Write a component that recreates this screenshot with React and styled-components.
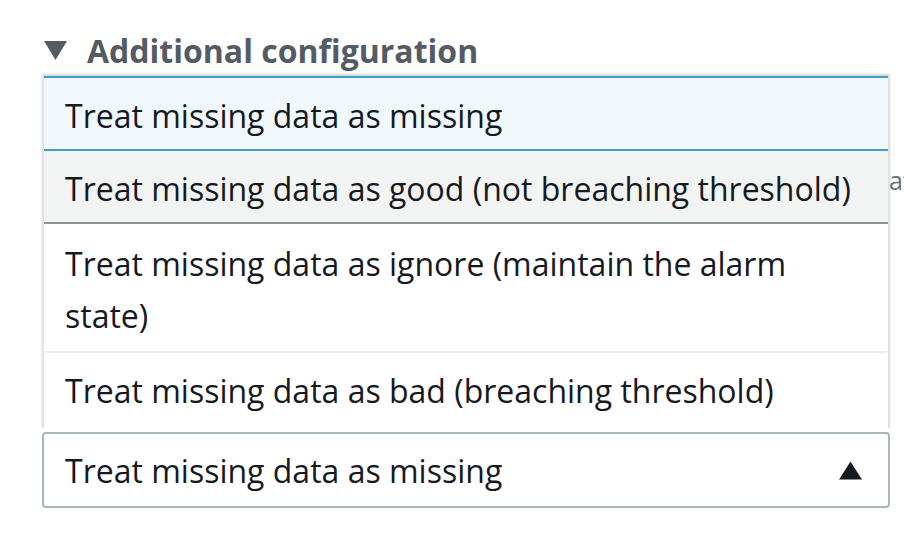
import React from "react";
import styled, { createGlobalStyle } from "styled-components";

const GlobalStyle = createGlobalStyle`
  html, body {
    margin: 0;
    padding: 0;
    background: #ffffff;
  }
  body {
    font-family: "Open Sans", "Noto Sans", sans-serif;
    color: #16191f;
    overflow: hidden;
  }
`;

const Page = styled.div`
  width: 848px;
  padding: 25px 0 0 42px;
`;

const Heading = styled.div`
  display: flex;
  align-items: center;
  gap: 20px;
  height: 51px;
  padding-left: 2px;
  color: #545b64;
  font-size: 32px;
  font-weight: 700;
`;

const Caret = styled.svg`
  width: 23px;
  height: 19px;
  fill: ${(p) => p.$color || "#545b64"};
  flex-shrink: 0;
`;

const Field = styled.div`
  position: relative;
  display: flex;
  flex-direction: column;
`;

const Underneath = styled.div`
  height: 356px;
  box-sizing: border-box;
  padding: 24px 0 0 23px;
  white-space: nowrap;
`;

const Label = styled.div`
  font-size: 32px;
  font-weight: 700;
  line-height: 52px;
`;

const Description = styled.div`
  display: flex;
  margin-top: 8px;
  font-size: 25px;
  line-height: 40px;
  color: #687078;
`;

// the part of the hint that the open menu hides
const Hidden = styled.span`
  flex: 0 0 824px;
  overflow: hidden;
`;

const Menu = styled.ul`
  position: absolute;
  top: 0;
  left: 0;
  right: 0;
  height: 352px;
  margin: 0;
  padding: 0;
  list-style: none;
  background: #ffffff;
  border-left: 2px solid #dfe3e4;
  border-right: 2px solid #dfe3e4;
  box-shadow: 0 -2px 2px rgba(0, 28, 36, 0.18);
  box-sizing: border-box;
  overflow: hidden;
`;

const Option = styled.li`
  padding: 12px 19px 7px;
  margin: ${(p) => (p.$selected || p.$hover ? "0 -2px" : "0")};
  font-size: 32px;
  line-height: 52px;
  color: #16191f;
  border: 2px solid transparent;
  border-top: 2px solid ${(p) => (p.$divider ? "#eaeded" : "transparent")};
  ${(p) =>
    p.$selected &&
    `
    background: #f1f8fb;
    border: 2px solid #3f9fca;
    padding-left: 21px;
  `}
  ${(p) =>
    p.$hover &&
    `
    background: #f2f3f3;
    border: 2px solid #879596;
    border-top: none;
    padding-left: 21px;
  `}
`;

const Select = styled.div`
  display: flex;
  align-items: center;
  justify-content: space-between;
  height: 76px;
  padding: 0 26px 0 21px;
  border: 2px solid #aab7b8;
  border-radius: 4px;
  box-sizing: border-box;
  font-size: 32px;
  color: #16191f;
`;

const options = [
  { label: "Treat missing data as missing", selected: true },
  { label: "Treat missing data as good (not breaching threshold)", hover: true },
  { label: "Treat missing data as ignore (maintain the alarm state)" },
  { label: "Treat missing data as bad (breaching threshold)", divider: true },
];

const App = () => (
  <>
    <GlobalStyle />
    <Page>
      <Heading>
        <Caret viewBox="0 0 23 19">
          <polygon points="0,0 23,0 11.5,19" />
        </Caret>
        Additional configuration
      </Heading>
      <Field>
        <Underneath>
          <Label>Missing data treatment</Label>
          <Description>
            <Hidden>Choose how the alarm handles missing data points when evalu</Hidden>
            ating the alarm.
          </Description>
        </Underneath>
        <Menu>
          {options.map((o) => (
            <Option key={o.label} $selected={o.selected} $hover={o.hover} $divider={o.divider}>
              {o.label}
            </Option>
          ))}
        </Menu>
        <Select>
          Treat missing data as missing
          <Caret viewBox="0 0 23 18" $color="#16191f">
            <polygon points="11.5,0 23,18 0,18" />
          </Caret>
        </Select>
      </Field>
    </Page>
  </>
);

export default App;
